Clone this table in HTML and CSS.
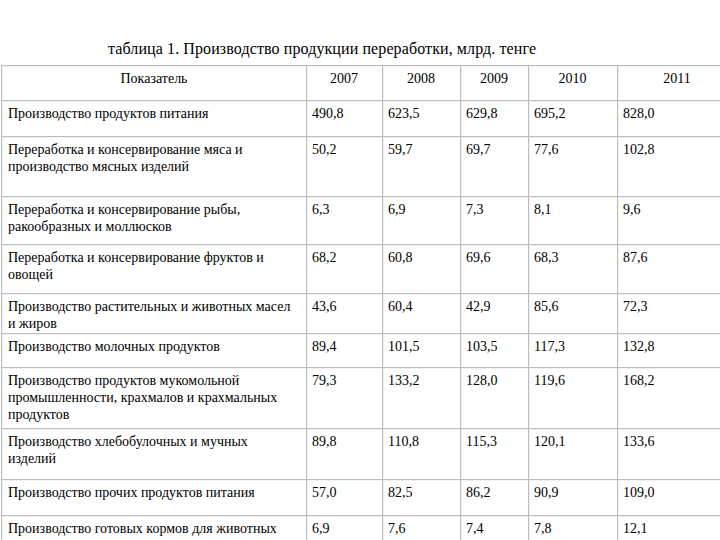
FILE: index.html
```html
<!DOCTYPE html>
<html lang="ru">
<head>
<meta charset="utf-8">
<title>таблица 1</title>
<link rel="stylesheet" href="styles.css">
</head>
<body>
<div class="page">
  <div class="title">таблица 1. Производство продукции переработки, млрд. тенге</div>
  <div class="grid">
    <div class="cell head first">Показатель</div>
    <div class="cell head">2007</div>
    <div class="cell head">2008</div>
    <div class="cell head">2009</div>
    <div class="cell head">2010</div>
    <div class="cell head">2011</div>

    <div class="cell first">Производство продуктов питания</div>
    <div class="cell">490,8</div><div class="cell">623,5</div><div class="cell">629,8</div><div class="cell">695,2</div><div class="cell">828,0</div>

    <div class="cell first">Переработка и консервирование мяса и производство мясных изделий</div>
    <div class="cell">50,2</div><div class="cell">59,7</div><div class="cell">69,7</div><div class="cell">77,6</div><div class="cell">102,8</div>

    <div class="cell first">Переработка и консервирование рыбы, ракообразных и моллюсков</div>
    <div class="cell">6,3</div><div class="cell">6,9</div><div class="cell">7,3</div><div class="cell">8,1</div><div class="cell">9,6</div>

    <div class="cell first">Переработка и консервирование фруктов и овощей</div>
    <div class="cell">68,2</div><div class="cell">60,8</div><div class="cell">69,6</div><div class="cell">68,3</div><div class="cell">87,6</div>

    <div class="cell first">Производство растительных и животных масел и жиров</div>
    <div class="cell">43,6</div><div class="cell">60,4</div><div class="cell">42,9</div><div class="cell">85,6</div><div class="cell">72,3</div>

    <div class="cell first">Производство молочных продуктов</div>
    <div class="cell">89,4</div><div class="cell">101,5</div><div class="cell">103,5</div><div class="cell">117,3</div><div class="cell">132,8</div>

    <div class="cell first">Производство продуктов мукомольной промышленности, крахмалов и крахмальных продуктов</div>
    <div class="cell">79,3</div><div class="cell">133,2</div><div class="cell">128,0</div><div class="cell">119,6</div><div class="cell">168,2</div>

    <div class="cell first">Производство хлебобулочных и мучных изделий</div>
    <div class="cell">89,8</div><div class="cell">110,8</div><div class="cell">115,3</div><div class="cell">120,1</div><div class="cell">133,6</div>

    <div class="cell first">Производство прочих продуктов питания</div>
    <div class="cell">57,0</div><div class="cell">82,5</div><div class="cell">86,2</div><div class="cell">90,9</div><div class="cell">109,0</div>

    <div class="cell first">Производство готовых кормов для животных</div>
    <div class="cell">6,9</div><div class="cell">7,6</div><div class="cell">7,4</div><div class="cell">7,8</div><div class="cell">12,1</div>
  </div>
</div>
</body>
</html>
```

FILE: styles.css
```css
html, body {
  margin: 0;
  padding: 0;
  background: #ffffff;
}

body {
  width: 720px;
  height: 540px;
  overflow: hidden;
  font-family: "Liberation Serif", "DejaVu Serif", serif;
  color: #000;
}

.page {
  width: 720px;
  height: 540px;
  overflow: hidden;
}

.title {
  box-sizing: border-box;
  height: 65px;
  padding: 40px 0 0 108px;
  font-size: 16px;
  letter-spacing: 0.1px;
  line-height: 18px;
  white-space: nowrap;
}

.grid {
  margin-left: 1px;
  display: grid;
  grid-template-columns: 305px 76px 78px 68px 89px 120px;
  grid-template-rows: 35px 36px 60px 48px 49px 40px 34px 61px 51px 36px 40px;
  border-top: 1px solid #bdbdbd;
  border-left: 1px solid #bdbdbd;
  width: max-content;
}

.cell {
  box-sizing: border-box;
  border-right: 1px solid #bdbdbd;
  border-bottom: 1px solid #bdbdbd;
  padding: 4px 6px 0 5px;
  font-size: 14px;
  line-height: 17px;
  box-shadow: inset 1px 1px 0 #f1f1f1;
}

.cell.first {
  padding-left: 6px;
  padding-right: 11px;
}

.cell.head {
  text-align: center;
  padding-top: 4px;
}

.cell.head.first {
  padding-right: 6px;
}
```
